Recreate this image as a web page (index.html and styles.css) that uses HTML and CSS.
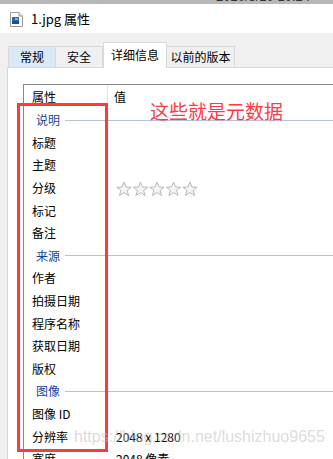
FILE: index.html
```html
<!DOCTYPE html>
<html>
<head>
<meta charset="utf-8">
<link rel="stylesheet" href="styles.css">
</head>
<body>
<div class="topstrip"><span class="clock">2020/3/10 10:24</span></div>
<div class="titlebar">
  <svg class="ficon" width="13" height="15" viewBox="0 0 13 15">
    <path d="M0.5 0.5 H9 L12.5 4 V14.5 H0.5 Z" fill="#fff" stroke="#9a9a9a"/>
    <path d="M9 0.5 V4 H12.5" fill="#e8e8e8" stroke="#9a9a9a"/>
    <rect x="2" y="5" width="7" height="7" fill="#2a6fb8"/>
    <rect x="2" y="9" width="7" height="3" fill="#1d4f8a"/>
    <rect x="5" y="6" width="3" height="2" fill="#6fb0e6"/>
  </svg>
  <span class="title">1.jpg 属性</span>
</div>
<div class="dialog">
  <div class="tabs">
    <div class="tab hover">常规</div>
    <div class="tab t2">安全</div>
    <div class="tab active">详细信息</div>
    <div class="tab t4">以前的版本</div>
  </div>
  <div class="panel">
    <div class="list">
      <div class="head">
        <div class="hc name">属性</div>
        <div class="hc val">值</div>
      </div>
      <div class="row group"><span class="gt">说明</span><span class="gl"></span></div>
      <div class="row"><span class="n">标题</span></div>
      <div class="row"><span class="n">主题</span></div>
      <div class="row"><span class="n">分级</span><span class="v stars">
        <svg width="82" height="16" viewBox="0 0 82 16">
          <defs><polygon id="st" points="8,1 10,6 15.2,6.2 11.1,9.4 12.6,14.5 8,11.6 3.4,14.5 4.9,9.4 0.8,6.2 6,6" fill="#f4f4f4" stroke="#b9b9b9" stroke-width="1"/></defs>
          <use href="#st" x="0"/><use href="#st" x="16.5"/><use href="#st" x="33"/><use href="#st" x="49.5"/><use href="#st" x="66"/>
        </svg></span></div>
      <div class="row"><span class="n">标记</span></div>
      <div class="row"><span class="n">备注</span></div>
      <div class="row group"><span class="gt">来源</span><span class="gl"></span></div>
      <div class="row"><span class="n">作者</span></div>
      <div class="row"><span class="n">拍摄日期</span></div>
      <div class="row"><span class="n">程序名称</span></div>
      <div class="row"><span class="n">获取日期</span></div>
      <div class="row"><span class="n">版权</span></div>
      <div class="row group"><span class="gt">图像</span><span class="gl"></span></div>
      <div class="row"><span class="n">图像 ID</span></div>
      <div class="row"><span class="n">分辨率</span><span class="v">2048 x 1280</span></div>
      <div class="row"><span class="n">宽度</span><span class="v">2048 像素</span></div>
    </div>
  </div>
</div>
<div class="redbox"></div>
<div class="note">这些就是元数据</div>
<div class="watermark">https://blog.csdn.net/lushizhuo9655</div>
</body>
</html>
```
FILE: styles.css
```css
html, body {
  margin: 0;
  padding: 0;
  width: 333px;
  height: 459px;
  overflow: hidden;
  background: #f0f0f0;
  font-family: "Noto Sans CJK SC", "Microsoft YaHei", sans-serif;
  font-size: 12px;
  color: #000;
  position: relative;
}
.topstrip {
  height: 4px;
  background: #b8b8b8;
  overflow: hidden;
  position: relative;
}
.clock {
  display: block;
  margin-top: -9px;
  margin-left: 216px;
  font-family: "Liberation Sans", sans-serif;
  font-size: 13px;
  line-height: 12px;
  color: #333;
}
.titlebar {
  height: 29px;
  background: #fff;
  display: flex;
  align-items: center;
  padding-left: 10px;
}
.ficon { display: block; margin-right: 8px; margin-top: 1px; }
.title {
  font-size: 13px;
  line-height: 16px;
  color: #000;
}
.dialog {
  background: #f0f0f0;
  padding-left: 7px;
}
.tabs {
  height: 34px;
  display: flex;
  align-items: flex-end;
  padding-left: 1px;
  position: relative;
  z-index: 1;
}
.tab {
  height: 21px;
  box-sizing: border-box;
  border: 1px solid #d9d9d9;
  border-bottom: none;
  display: flex;
  align-items: center;
  justify-content: center;
  line-height: 14px;
  margin-bottom: 0;
  background: #f0f0f0;
}
.tab.hover { width: 48px; background: #d9e9f6; }
.tab.t2 { width: 47px; border-left: none; }
.tab.active {
  width: 64px;
  height: 25px;
  background: #fff;
  margin-bottom: -1px;
  height: 26px;
  padding-bottom: 1px;
  border-left: 1px solid #d9d9d9;
}
.tab.t4 { width: 68px; border-left: none; }
.panel {
  background: #fff;
  border-left: 1px solid #d9d9d9;
  border-top: 1px solid #d9d9d9;
  padding: 16px 0 0 15px;
  height: 400px;
}
.list {
  border-left: 1px solid #828790;
  border-top: 1px solid #828790;
  height: 400px;
}
.head {
  height: 24px;
  display: flex;
}
.hc { line-height: 24px; height: 20px; }
.hc.name {
  width: 84px;
  padding-left: 8px;
  box-sizing: border-box;
  border-right: 1px solid #e5e5e5;
  line-height: 24px;
}
.hc.val { padding-left: 6px; }
.row {
  height: 22.6px;
  display: flex;
  align-items: center;
  line-height: 16px;
}
.row .n { width: 92px; padding-left: 8px; box-sizing: border-box; flex: none; }
.row .v { font-size: 12px; }
.row .stars { display: flex; margin-top: 1px; }
.stars svg { display: block; }
.row.group .gt {
  padding-left: 12px;
  color: #1a3f9c;
  flex: none;
}
.row.group .gl {
  flex: 1;
  height: 1px;
  background: #b4c2e2;
  margin-left: 5px;
}
.redbox {
  position: absolute;
  left: 17px;
  top: 103px;
  width: 91px;
  height: 349px;
  box-sizing: border-box;
  border: 3px solid #ff3a3f;
}
.note {
  position: absolute;
  left: 150px;
  top: 98px;
  font-size: 19px;
  line-height: 26px;
  color: #ff3a3f;
}
.watermark {
  position: absolute;
  left: 74px;
  top: 427px;
  font-family: "Liberation Sans", sans-serif;
  font-size: 16px;
  line-height: 20px;
  color: rgba(190, 190, 190, 0.55);
  white-space: nowrap;
}
```
